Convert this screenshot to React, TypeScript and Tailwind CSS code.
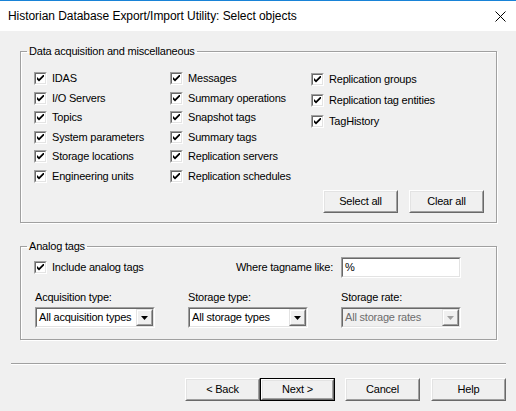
import React from "react";

const FONT = "[font-family:'Liberation_Sans',Arial,sans-serif]";

function Check() {
  return (
    <div className="w-[13px] h-[13px] shrink-0 border border-t-[#a0a0a0] border-l-[#a0a0a0] border-b-white border-r-white">
      <div className="w-full h-full border border-t-[#696969] border-l-[#696969] border-b-[#e3e3e3] border-r-[#e3e3e3] bg-white flex items-center justify-center">
        <svg width="7" height="7" viewBox="0 0 7 7">
          <polygon points="0,2 2,4 7,-1 7,1.5 2,6.5 0,4.5" fill="#000" />
        </svg>
      </div>
    </div>
  );
}

function CheckRow({ label, h }: { label: string; h: string }) {
  return (
    <div className={"flex items-center " + h}>
      <Check />
      <span className="ml-[5px] text-[11px] leading-[13px] tracking-[-0.2px] text-black whitespace-nowrap">{label}</span>
    </div>
  );
}

function Button({ children, def }: { children: React.ReactNode; def?: boolean }) {
  const inner = (
    <div className="w-full h-full border border-t-white border-l-white border-b-[#696969] border-r-[#696969]">
      <div className="w-full h-full border border-t-[#e3e3e3] border-l-[#e3e3e3] border-b-[#a0a0a0] border-r-[#a0a0a0] bg-[#f0f0f0] flex items-center justify-center text-[11px] tracking-[-0.2px] text-black">
        {children}
      </div>
    </div>
  );
  if (def) {
    return <div className="w-[75px] h-[23px] border border-[#000]">{inner}</div>;
  }
  return <div className="w-[75px] h-[23px]">{inner}</div>;
}

function Sunken({ children, disabled }: { children: React.ReactNode; disabled?: boolean }) {
  return (
    <div className="w-[120px] h-[21px] border border-t-[#a0a0a0] border-l-[#a0a0a0] border-b-white border-r-white">
      <div
        className={
          "w-full h-full border border-t-[#696969] border-l-[#696969] border-b-[#e3e3e3] border-r-[#e3e3e3] flex items-center " +
          (disabled ? "bg-[#f0f0f0]" : "bg-white")
        }
      >
        {children}
      </div>
    </div>
  );
}

function Dropdown({ value, disabled }: { value: string; disabled?: boolean }) {
  return (
    <Sunken disabled={disabled}>
      <span
        className={
          "flex-1 pl-[2px] text-[11px] tracking-[-0.2px] whitespace-nowrap " +
          (disabled ? "text-[#6d6d6d]" : "text-black")
        }
      >
        {value}
      </span>
      <div className="w-[17px] h-[17px] border border-t-[#e3e3e3] border-l-[#e3e3e3] border-b-[#696969] border-r-[#696969]">
        <div className="w-full h-full border border-t-white border-l-white border-b-[#a0a0a0] border-r-[#a0a0a0] bg-[#f0f0f0] flex items-center justify-center">
          <svg width="7" height="4" viewBox="0 0 7 4">
            <polygon points="0,0 7,0 3.5,4" fill={disabled ? "#a0a0a0" : "#000"} />
          </svg>
        </div>
      </div>
    </Sunken>
  );
}

export default function App() {
  const col1 = ["IDAS", "I/O Servers", "Topics", "System parameters", "Storage locations", "Engineering units"];
  const col2 = ["Messages", "Summary operations", "Snapshot tags", "Summary tags", "Replication servers", "Replication schedules"];
  const col3 = ["Replication groups", "Replication tag entities", "TagHistory"];

  return (
    <div className={"w-[516px] h-[411px] bg-[#f0f0f0] flex flex-col overflow-hidden " + FONT}>
      <div className="h-[31px] shrink-0 bg-white border-t border-[#1883d7] flex items-center justify-between pl-[8px] pr-[10px]">
        <span className="text-[12px] tracking-[-0.05px] text-black whitespace-nowrap">Historian Database Export/Import Utility: Select objects</span>
        <svg width="11" height="11" viewBox="0 0 11 11">
          <path d="M0.5 0.5 L10.5 10.5 M10.5 0.5 L0.5 10.5" stroke="#000" strokeWidth="1" />
        </svg>
      </div>

      <fieldset className="ml-[20px] mt-[14px] w-[477px] border border-[#a0a0a0] shadow-[inset_1px_1px_0_#fff,1px_1px_0_#fff] pl-[13px] pr-[12px] pb-[9px] pt-[11px]">
        <legend className="-ml-[7px] px-[2px] text-[11px] leading-[13px] tracking-[-0.2px] text-black">
          Data acquisition and miscellaneous
        </legend>
        <div className="flex">
          <div className="w-[136px] flex flex-col">
            {col1.map((l) => (
              <CheckRow key={l} label={l} h="h-[19.5px]" />
            ))}
          </div>
          <div className="w-[141px] flex flex-col">
            {col2.map((l) => (
              <CheckRow key={l} label={l} h="h-[19.5px]" />
            ))}
          </div>
          <div className="flex flex-col">
            {col3.map((l) => (
              <CheckRow key={l} label={l} h="h-[21px]" />
            ))}
          </div>
        </div>
        <div className="flex justify-end gap-[11px] mt-[4px]">
          <Button>Select all</Button>
          <Button>Clear all</Button>
        </div>
      </fieldset>

      <fieldset className="ml-[20px] mt-[17px] w-[477px] border border-[#a0a0a0] shadow-[inset_1px_1px_0_#fff,1px_1px_0_#fff] pl-[13px] pr-[35px] pb-[11px] pt-[4px]">
        <legend className="-ml-[7px] px-[2px] text-[11px] leading-[13px] tracking-[-0.2px] text-black">Analog tags</legend>
        <div className="flex items-center h-[21px]">
          <div className="flex-1">
            <CheckRow label="Include analog tags" h="h-[21px]" />
          </div>
          <span className="text-[11px] tracking-[-0.2px] text-black whitespace-nowrap">Where tagname like:</span>
          <div className="ml-[8px]">
            <Sunken>
              <span className="pl-[2px] text-[11px] text-black">%</span>
            </Sunken>
          </div>
        </div>
        <div className="flex mt-[13px] pl-[1px]">
          <div className="w-[153px] flex flex-col gap-[3px]">
            <span className="text-[11px] leading-[13px] tracking-[-0.2px] text-black">Acquisition type:</span>
            <Dropdown value="All acquisition types" />
          </div>
          <div className="w-[153px] flex flex-col gap-[3px]">
            <span className="text-[11px] leading-[13px] tracking-[-0.2px] text-black">Storage type:</span>
            <Dropdown value="All storage types" />
          </div>
          <div className="w-[120px] flex flex-col gap-[3px]">
            <span className="text-[11px] leading-[13px] tracking-[-0.2px] text-black">Storage rate:</span>
            <Dropdown value="All storage rates" disabled />
          </div>
        </div>
      </fieldset>

      <div className="ml-[11px] mr-[10px] mt-[23px] h-[2px] border-t border-[#a0a0a0] border-b border-b-white" />

      <div className="flex justify-end pr-[10px] mt-[13px]">
        <Button>&lt; Back</Button>
        <Button def>Next &gt;</Button>
        <div className="ml-[10px]">
          <Button>Cancel</Button>
        </div>
        <div className="ml-[11px]">
          <Button>Help</Button>
        </div>
      </div>
    </div>
  );
}
